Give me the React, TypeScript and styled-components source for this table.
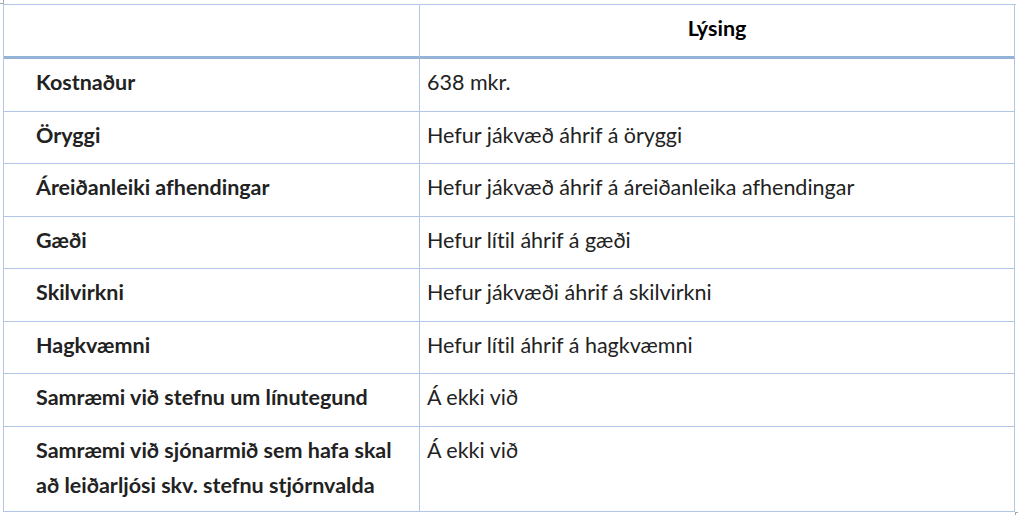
import React from "react";
import styled, { createGlobalStyle } from "styled-components";

type Row = { label: string; value: string };

const rows: Row[] = [
  { label: "Kostnaður", value: "638 mkr." },
  { label: "Öryggi", value: "Hefur jákvæð áhrif á öryggi" },
  { label: "Áreiðanleiki afhendingar", value: "Hefur jákvæð áhrif á áreiðanleika afhendingar" },
  { label: "Gæði", value: "Hefur lítil áhrif á gæði" },
  { label: "Skilvirkni", value: "Hefur jákvæði áhrif á skilvirkni" },
  { label: "Hagkvæmni", value: "Hefur lítil áhrif á hagkvæmni" },
  { label: "Samræmi við stefnu um línutegund", value: "Á ekki við" },
  {
    label: "Samræmi við sjónarmið sem hafa skal að leiðarljósi skv. stefnu stjórnvalda",
    value: "Á ekki við",
  },
];

const GlobalStyle = createGlobalStyle`
  html, body {
    margin: 0;
    padding: 0;
    background: #ffffff;
  }
  body {
    font-family: Lato, "Open Sans", "Liberation Sans", sans-serif;
    color: #262626;
  }
`;

export default function App() {
  return (
    <>
      <GlobalStyle />
      <Page>
        <CornerMark $pos="tl" />
        <Table>
          <Cell $head />
          <Cell $head $second $center>
            Lýsing
          </Cell>
          {rows.map((r) => (
            <React.Fragment key={r.label}>
              <Cell $bold>{r.label}</Cell>
              <Cell $second>{r.value}</Cell>
            </React.Fragment>
          ))}
        </Table>
        <CornerMark $pos="br" />
      </Page>
    </>
  );
}

const Page = styled.div`
  position: relative;
  width: 1018px;
  height: 515px;
  box-sizing: border-box;
  padding: 4px 0 0 3px;
`;

const CornerMark = styled.div<{ $pos: "tl" | "br" }>`
  position: absolute;
  width: 3px;
  height: 3px;
  ${({ $pos }) =>
    $pos === "tl"
      ? `left: 0; top: 0; border-right: 1px solid #a6a6a6; border-bottom: 1px solid #a6a6a6;`
      : `left: 1015px; top: 512px; border-left: 1px solid #a6a6a6; border-top: 1px solid #a6a6a6;`}
`;

const Table = styled.div`
  display: grid;
  grid-template-columns: 416px 595px;
  grid-template-rows: 54px 53px 52px 53px 52px 53px 52px 53px 85px;
  width: 1012px;
  border-top: 1px solid #b4c6e7;
  border-left: 1px solid #b4c6e7;
`;

const Cell = styled.div<{ $head?: boolean; $second?: boolean; $bold?: boolean; $center?: boolean }>`
  box-sizing: border-box;
  border-right: 1px solid #b4c6e7;
  border-bottom: ${({ $head }) => ($head ? "3px solid #95b3d7" : "1px solid #b4c6e7")};
  padding: 6px ${({ $second }) => ($second ? "7px" : "24px")} 0
    ${({ $second }) => ($second ? "7px" : "32px")};
  font-size: 21.5px;
  line-height: 35px;
  font-variant-ligatures: none;
  font-weight: ${({ $head, $bold }) => ($head || $bold ? 700 : 400)};
  text-align: ${({ $center }) => ($center ? "center" : "left")};
  color: ${({ $head }) => ($head ? "#000000" : "#222222")};
`;
